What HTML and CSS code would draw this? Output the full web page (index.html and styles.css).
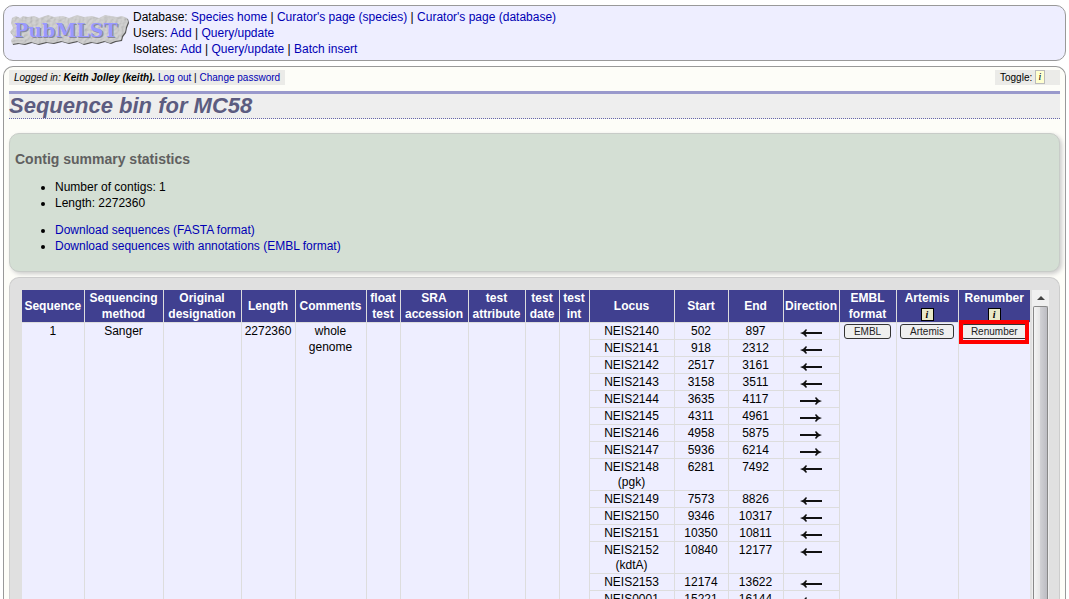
FILE: index.html
```
<!DOCTYPE html>
<html lang="en">
<head>
<meta charset="utf-8">
<title>Sequence bin for MC58</title>
<link rel="stylesheet" href="styles.css">
</head>
<body>
<header class="site-header">
  <svg class="logo" viewBox="0 0 120 36" role="img" aria-label="PubMLST">
    <defs>
      <filter id="stone" x="-5%" y="-10%" width="110%" height="125%">
        <feTurbulence type="fractalNoise" baseFrequency="0.35" numOctaves="3" seed="4" result="n"/>
        <feDiffuseLighting in="n" surfaceScale="0.9" lighting-color="#d4d4d4" result="l"><feDistantLight azimuth="225" elevation="66"/></feDiffuseLighting>
        <feComposite in="l" in2="SourceGraphic" operator="in" result="r"/>
        <feDropShadow in="r" dx="1" dy="1" stdDeviation="0.5" flood-color="#555"/>
      </filter>
    </defs>
    <path filter="url(#stone)" fill="#bbb" d="M3 5L7 3L11 5L14 3L19 4L25 3L30 5L39 2L45 4L54 3L60 5L68 2L75 4L83 3L90 5L96 2L102 3L108 4L113 3L118 5L119 9L117 14L116 19L113 23L112 27L106 28L101 30L95 28L88 30L82 29L74 31L68 28L59 30L52 28L44 30L37 29L29 31L22 29L15 31L9 30L3 31L2 27L5 24L1 19L4 15L2 10Z"/>
    <text x="6" y="25" class="logo-shade">PubMLST</text>
    <text x="5" y="24" class="logo-text">PubMLST</text>
  </svg>
  <nav class="site-nav">
    <div>Database: <a href="#">Species home</a> | <a href="#">Curator's page (species)</a> | <a href="#">Curator's page (database)</a></div>
    <div>Users: <a href="#">Add</a> | <a href="#">Query/update</a></div>
    <div>Isolates: <a href="#">Add</a> | <a href="#">Query/update</a> | <a href="#">Batch insert</a></div>
  </nav>
</header>
<main class="page">
  <div class="status">
    <div class="login"><i>Logged in: <b>Keith Jolley (keith).</b></i> <a href="#">Log out</a> | <a href="#">Change password</a></div>
    <div class="toggle">Toggle: <button class="tip" type="button">i</button></div>
  </div>
  <h1>Sequence bin for MC58</h1>
  <section class="summary">
    <h2>Contig summary statistics</h2>
    <ul><li>Number of contigs: 1</li><li>Length: 2272360</li></ul>
    <ul><li><a href="#">Download sequences (FASTA format)</a></li><li><a href="#">Download sequences with annotations (EMBL format)</a></li></ul>
  </section>
  <section class="results">
    <table>
      <colgroup><col class="w62"><col class="w79"><col class="w78"><col class="w54"><col class="w71"><col class="w34"><col class="w68"><col class="w57"><col class="w34"><col class="w30"><col class="w85"><col class="w54"><col class="w55"><col class="w56"><col class="w57"><col class="w62"><col class="w72"></colgroup>
      <thead><tr><th>Sequence</th><th>Sequencing method</th><th>Original designation</th><th>Length</th><th>Comments</th><th>float test</th><th>SRA accession</th><th>test attribute</th><th>test date</th><th>test int</th><th>Locus</th><th>Start</th><th>End</th><th>Direction</th><th>EMBL format</th><th>Artemis<br><button class="tip dark" type="button">i</button></th><th>Renumber<br><button class="tip dark" type="button">i</button></th></tr></thead>
      <tbody>
        <tr><td rowspan="15">1</td><td rowspan="15">Sanger</td><td rowspan="15"></td><td rowspan="15">2272360</td><td rowspan="15">whole genome</td><td rowspan="15"></td><td rowspan="15"></td><td rowspan="15"></td><td rowspan="15"></td><td rowspan="15"></td><td>NEIS2140</td><td>502</td><td>897</td><td class="left"></td><td rowspan="15"><button class="action" type="button">EMBL</button></td><td rowspan="15"><button class="action" type="button">Artemis</button></td><td rowspan="15"><div class="marked"><button class="action" type="button">Renumber</button></div></td></tr>
        <tr><td>NEIS2141</td><td>918</td><td>2312</td><td class="left"></td></tr>
        <tr><td>NEIS2142</td><td>2517</td><td>3161</td><td class="left"></td></tr>
        <tr><td>NEIS2143</td><td>3158</td><td>3511</td><td class="left"></td></tr>
        <tr><td>NEIS2144</td><td>3635</td><td>4117</td><td class="right"></td></tr>
        <tr><td>NEIS2145</td><td>4311</td><td>4961</td><td class="right"></td></tr>
        <tr><td>NEIS2146</td><td>4958</td><td>5875</td><td class="right"></td></tr>
        <tr><td>NEIS2147</td><td>5936</td><td>6214</td><td class="right"></td></tr>
        <tr><td class="alias">NEIS2148<br>(pgk)</td><td>6281</td><td>7492</td><td class="left"></td></tr>
        <tr><td>NEIS2149</td><td>7573</td><td>8826</td><td class="left"></td></tr>
        <tr><td>NEIS2150</td><td>9346</td><td>10317</td><td class="left"></td></tr>
        <tr><td>NEIS2151</td><td>10350</td><td>10811</td><td class="left"></td></tr>
        <tr><td class="alias">NEIS2152<br>(kdtA)</td><td>10840</td><td>12177</td><td class="left"></td></tr>
        <tr><td>NEIS2153</td><td>12174</td><td>13622</td><td class="left"></td></tr>
        <tr><td>NEIS0001</td><td>15221</td><td>16144</td><td class="left"></td></tr>
      </tbody>
    </table>
    <div class="scrollbar"><button class="scroll-up" type="button" aria-label="Scroll up"><svg viewBox="0 0 8 4"><path d="M0 4L4 0L8 4Z" fill="#444"/></svg></button><div class="thumb"></div></div>
  </section>
</main>
<script src="arrows.js"></script>
</body>
</html>
```
FILE: arrows.js
```
const paths = {
  left: ['M22 6H3', 'M0 6Q4 5 6 2L7 3L5 6L7 9L6 10Q4 7 0 6Z'],
  right: ['M0 6H19', 'M22 6Q18 5 16 2L15 3L17 6L15 9L16 10Q18 7 22 6Z']
};
for (const side of Object.keys(paths)) {
  const [shaft, head] = paths[side];
  document.querySelectorAll('td.' + side).forEach(cell => {
    cell.innerHTML = '<svg class="arrow" viewBox="0 0 22 12" role="img" aria-label="' + side + '"><path class="shaft" d="' + shaft + '"/><path d="' + head + '"/></svg>';
  });
}
```
FILE: styles.css
```
* { box-sizing: border-box; }
body {
  margin: 0;
  padding: 5px 3px 0;
  height: 100vh;
  overflow: hidden;
  display: flex;
  flex-direction: column;
  gap: 5px;
  background: #fff;
  color: #000;
  font: 12px/16px "Liberation Sans", Arial, sans-serif;
}
a { color: #0000b4; text-decoration: none; }
button { font-family: inherit; margin: 0; }
.site-header {
  display: flex;
  gap: 4px;
  padding: 3px 5px;
  border: 1px solid #999;
  border-radius: 10px;
  background: #eef;
}
.logo { width: 120px; height: 36px; margin-top: 4px; flex: none; }
.logo-text, .logo-shade { font: bold 19px "DejaVu Serif", serif; fill: #99f; }
.logo-shade { fill: #889; }
.page {
  flex: 1;
  min-height: 0;
  display: flex;
  flex-direction: column;
  padding: 3px 5px 0;
  border: 1px solid #999;
  border-bottom: 0;
  border-radius: 10px 10px 0 0;
  background: #fdfdf8;
}
.status { display: flex; justify-content: space-between; font-size: 10px; line-height: 15px; }
.login, .toggle { background: #ebebe8; padding: 0 5px; }
.toggle { padding-right: 15px; }
.tip {
  width: 10px;
  height: 14px;
  padding: 0;
  border: 1px solid #bbb;
  background: #ffffd0;
  color: #000;
  font: italic 10px/12px "Liberation Serif", serif;
  vertical-align: top;
}
.tip.dark { width: 13px; height: 13px; border: 1px solid #000; background: #e8e8c8; font-weight: bold; line-height: 11px; vertical-align: middle; }
h1 {
  margin: 6px 0 14px;
  border-top: 3px solid #99c;
  border-bottom: 1px dotted #66a;
  background: #eee;
  color: #5c5c80;
  font: italic bold 22px/24px "Liberation Sans", Arial, sans-serif;
}
.summary {
  flex: none;
  padding: 17px 5px 17px;
  border: 1px solid #c8ccc8;
  border-radius: 10px;
  background: #d4dfd4;
  box-shadow: 2px 2px 4px #ccc;
}
h2 { margin: 0; color: #606060; font-size: 14px; line-height: 16px; }
ul { margin: 12px 0 0; padding-left: 40px; }
ul + ul { margin-top: 11px; }
.results {
  flex: 1;
  min-height: 0;
  display: flex;
  gap: 2px;
  overflow: hidden;
  margin-top: 5px;
  padding: 12px 11px 0 12px;
  border: 1px solid #ccc;
  border-bottom: 0;
  border-radius: 10px 10px 0 0;
  background: #e0e0e0;
}
table { flex: 1; align-self: flex-start; table-layout: fixed; width: 100%; border-collapse: collapse; background: #eef; text-align: center; }
th, td { padding: 0; border: 1px solid #ddd; vertical-align: top; }
th { background: #404090; color: #fff; vertical-align: middle; border-top: 0; }
th:first-child, td[rowspan]:first-child { border-left: 0; }
th:last-child, td[rowspan]:last-child { border-right: 0; }
.alias { line-height: 15px; padding-top: 1px; }
.w30 { width: 30px; } .w34 { width: 34px; } .w54 { width: 54px; }
.w55 { width: 55px; } .w56 { width: 56px; } .w57 { width: 57px; }
.w62 { width: 62px; } .w68 { width: 68px; } .w71 { width: 71px; }
.w72 { width: 72px; } .w78 { width: 78px; } .w79 { width: 79px; } .w85 { width: 85px; }
.arrow { display: block; width: 22px; height: 12px; margin: 4px auto 0; fill: #111; }
.shaft { stroke: #111; stroke-width: 2; }
.action {
  height: 15px;
  margin-top: 1px;
  padding: 0 9px;
  border: 1px solid #333;
  border-radius: 3px;
  background: #efefef;
  color: #222;
  font-size: 10px;
  line-height: 13px;
  vertical-align: top;
}
.marked { position: relative; }
.marked::after { content: ""; position: absolute; inset: -3px 1px -5px 0; border: 4px solid #f00; pointer-events: none; }
.scrollbar { flex: none; width: 17px; display: flex; flex-direction: column; background: #eee; }
.scroll-up { height: 16px; border: 0; padding: 0; background: #f0f0f0; display: grid; place-items: center; }
.scroll-up svg { width: 8px; height: 4px; }
.thumb {
  flex: 1;
  margin: 0 1px;
  border: 1px solid #888;
  border-bottom: 0;
  border-radius: 2px 2px 0 0;
  background: linear-gradient(90deg, #f4f4f4, #e6e6e6 45%, #d0d0d4 50%, #bcbcc2);
}
```
